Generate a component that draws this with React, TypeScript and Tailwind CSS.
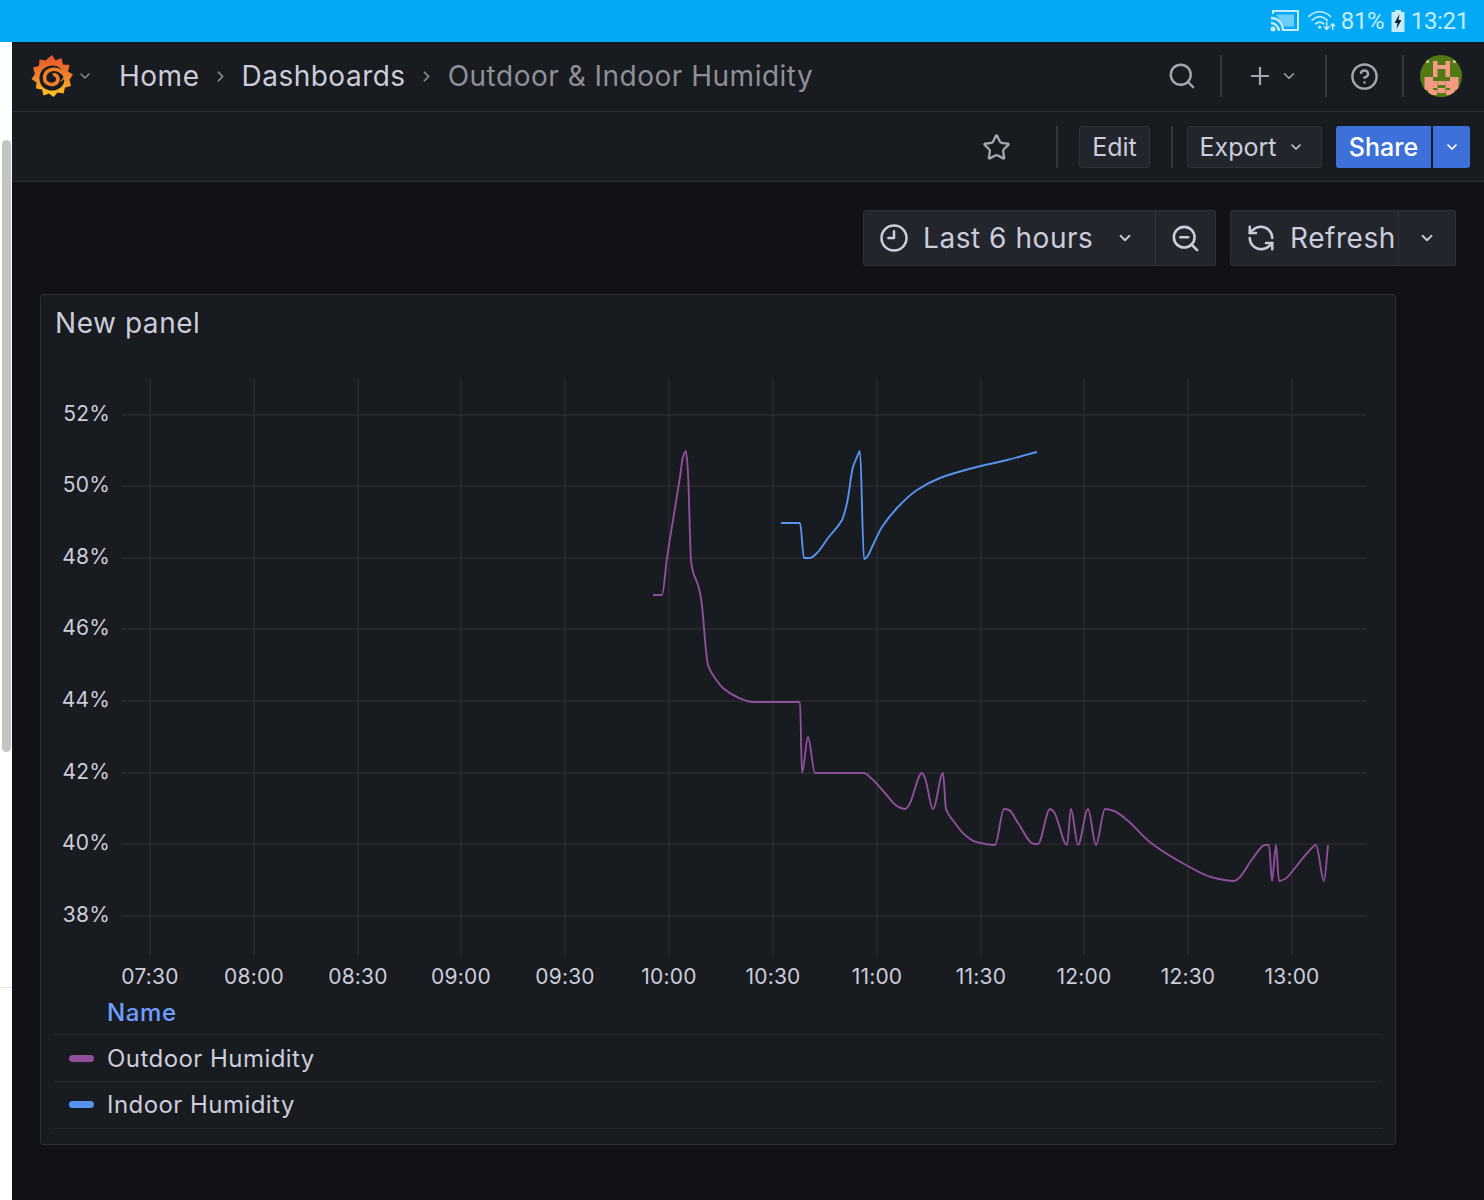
import React, { ReactNode } from 'react';
import { ChevronDown, ChevronRight, CircleHelp, Plus, RefreshCcw, Search, Star, ZoomOut } from 'lucide-react';

const yLabels = [
  { y: 415, label: '52%' },
  { y: 486, label: '50%' },
  { y: 558, label: '48%' },
  { y: 629, label: '46%' },
  { y: 701, label: '44%' },
  { y: 773, label: '42%' },
  { y: 844, label: '40%' },
  { y: 916, label: '38%' },
];

const xLabels = [
  { x: 150, label: '07:30' },
  { x: 254, label: '08:00' },
  { x: 358, label: '08:30' },
  { x: 461, label: '09:00' },
  { x: 565, label: '09:30' },
  { x: 669, label: '10:00' },
  { x: 773, label: '10:30' },
  { x: 877, label: '11:00' },
  { x: 981, label: '11:30' },
  { x: 1084, label: '12:00' },
  { x: 1188, label: '12:30' },
  { x: 1292, label: '13:00' },
];

const outdoor =
  '653,595 662,595 667,558 680,477 683,457 686,451 688,473 691,560 693,572 698,585 701,598 708,665 713,675 723,688 737,697 753,702 800,702 802,773 808,737 815,773 864,773 871,778 885,793 897,806 905,809 909,805 922,773 925,778 933,809 943,773 946,809 955,823 965,835 976,842 995,845 1004,809 1009,810 1018,823 1034,844 1038,844 1050,809 1054,812 1067,845 1071,809 1078,845 1088,809 1096,845 1105,809 1114,811 1127,820 1151,843 1186,865 1211,877 1234,881 1239,878 1253,858 1265,845 1269,845 1272,881 1276,845 1279,881 1285,879 1295,868 1309,851 1316,845 1324,881 1328,845';

const indoor =
  '781,523 800,523 804,558 810,558 817,553 828,538 842,520 847,503 853,467 857,457 860,451 864,559 867,557 873,545 882,527 897,508 917,490 940,478 973,468 1007,460 1037,452';

// monotone cubic through the points, so peaks stay on their value
function smoothPath(points: string) {
  const p = points.split(' ').map((s) => s.split(',').map(Number));
  const slope = (i: number) => (p[i + 1][1] - p[i][1]) / (p[i + 1][0] - p[i][0]);
  const tangent = (i: number) => {
    if (i === 0) return slope(0);
    if (i === p.length - 1) return slope(i - 1);
    const a = slope(i - 1);
    const b = slope(i);
    if (a * b <= 0) return 0;
    return (2 * a * b) / (a + b);
  };
  let d = `M${p[0][0]},${p[0][1]}`;
  for (let i = 0; i < p.length - 1; i++) {
    const h = (p[i + 1][0] - p[i][0]) / 3;
    d += `C${p[i][0] + h},${p[i][1] + h * tangent(i)} ${p[i + 1][0] - h},${p[i + 1][1] - h * tangent(i + 1)} ${p[i + 1][0]},${p[i + 1][1]}`;
  }
  return d;
}

const avatarPixels = [
  [13, 6, 4.5, 16], [25.5, 6, 4.5, 16], [13, 10, 17, 4], [4.5, 22, 8.5, 13], [30, 22, 8.5, 13],
  [8, 35, 9, 5], [26, 35, 9, 5], [13, 26, 4.5, 7], [25.5, 26, 4.5, 7], [17.5, 26, 8, 4], [17.5, 33, 8, 5],
];

function Sep({ h = 'h-[42px]' }: { h?: string }) {
  return <div className={`w-0.5 bg-[#34373c] ${h}`}></div>;
}

function Logo() {
  return (
    <svg width="42" height="42" viewBox="0 0 42 42">
      <defs>
        <linearGradient id="gf" x1="0" y1="0" x2="0" y2="1">
          <stop offset="0" stopColor="#e8532c" />
          <stop offset="0.5" stopColor="#f0812a" />
          <stop offset="1" stopColor="#fbca20" />
        </linearGradient>
      </defs>
      <path
        fill="url(#gf)"
        d="M21 0l3.500 5.500 6-2.500 1.500 6.500 6.500.5-1.500 6.500 5 3-3.500 5 1.500 6.500-6 1.500-1.500 6-6-1-4 4.500-4.500-3.500-5.500 2-1.500-6-6-1 .5-6-5-3.500 3.500-5L2 12.500l6-1.500.5-6.500 6 1z"
      />
      {/* dark swirl cut out of the gear */}
      <path fill="#181b1f" d="M34 20C31 12 24 9 18 11 10 13 7 21 9 27c2 7 10 10 16 8 6-2 9-7 8-11-2 2-3 3-4 3z" />
      <path
        fill="none"
        stroke="#f0812a"
        strokeWidth="3.600"
        d="M35 22C31 15 24 13 19 15 13 17 12 25 16 28c5 3 11 1 11-4 0-3-3-5-5-4"
      />
    </svg>
  );
}

function Avatar() {
  return (
    <svg width="42" height="42" viewBox="0 0 42 42">
      <defs>
        <clipPath id="av">
          <circle cx="21" cy="21" r="21" />
        </clipPath>
      </defs>
      <g clipPath="url(#av)">
        <rect width="42" height="42" fill="#527a14" />
        <rect x="6" y="5" width="3" height="3" fill="#c9c48c" />
        <rect x="33" y="5" width="3" height="3" fill="#c9c48c" />
        <g fill="#f29a84">
          {avatarPixels.map(([x, y, w, h], i) => (
            <rect key={i} x={x} y={y} width={w} height={h} />
          ))}
        </g>
      </g>
    </svg>
  );
}

function ClockIcon() {
  return (
    <svg width="30" height="30" viewBox="0 0 24 24" fill="none" stroke="#ccccdc" strokeWidth="2" strokeLinecap="round" strokeLinejoin="round">
      <circle cx="12" cy="12" r="10" />
      <path d="M12 6.500V12H7.500" />
    </svg>
  );
}

function CastIcon() {
  return (
    <svg width="30" height="24" viewBox="0 0 30 24" fill="none" stroke="#c4ecfd" strokeWidth="2">
      <path d="M3 5V2h25v19H14" />
      <path d="M6 5.500h18v12H14.500" fill="#c4ecfd" fillOpacity="0.55" stroke="none" />
      <path d="M1 9c7 0 12 5 12 13M1 14c4 0 8 4 8 8" strokeWidth="2.4" />
      <circle cx="3" cy="20" r="2.500" fill="#c4ecfd" stroke="none" />
    </svg>
  );
}

function WifiIcon() {
  return (
    <svg width="28" height="24" viewBox="0 0 30 24" fill="none" stroke="#c4ecfd" strokeWidth="1.8" strokeLinecap="round">
      <path d="M1 7c7-6.500 16-6.500 23 0M4.500 11c5-4.500 11-4.500 16 0M8 15c3-2.500 6-2.500 9 0" />
      <circle cx="12.500" cy="18.500" r="1.800" fill="#c4ecfd" stroke="none" />
      <path d="M20 13v8M17.500 18.500l2.500 2.500 2.500-2.500M26.500 21v-6M24.500 17l2-2 2 2" strokeWidth="1.6" />
    </svg>
  );
}

function BatteryIcon() {
  return (
    <svg width="14" height="24" viewBox="0 0 14 24">
      <path d="M4 1h6v2h3.500v20H.5V3H4z" fill="#c4ecfd" />
      <path d="M8.500 5L3.500 14h3l-1 6 5-9h-3z" fill="#10222d" />
    </svg>
  );
}

function Crumb({ children, muted }: { children: ReactNode; muted?: boolean }) {
  return (
    <span className={`text-[28px] leading-none tracking-[0.5px] ${muted ? 'text-[#8e8f99]' : 'text-[#ccccdc]'}`}>
      {children}
    </span>
  );
}

function Chart() {
  return (
    <svg width="1354" height="643" viewBox="41 352 1354 643" className="block" fontFamily="Inter, sans-serif">
      {xLabels.map((t) => (
        <line key={t.x} x1={t.x} x2={t.x} y1="379" y2="955" stroke="#303338" strokeWidth="1" />
      ))}
      {yLabels.map((t) => (
        <line key={t.y} x1="122" x2="1366" y1={t.y} y2={t.y} stroke="#303338" strokeWidth="1" />
      ))}
      {yLabels.map((t) => (
        <text key={t.y} x="110" y={t.y + 6} fontSize="21" fill="#ccccdc" textAnchor="end" letterSpacing="0.2">
          {t.label}
        </text>
      ))}
      {xLabels.map((t) => (
        <text key={t.x} x={t.x} y="984" fontSize="21" fill="#ccccdc" textAnchor="middle" letterSpacing="0.2">
          {t.label}
        </text>
      ))}
      <path d={smoothPath(outdoor)} fill="none" stroke="#8f4f9c" strokeWidth="1.9" strokeLinejoin="round" />
      <path d={smoothPath(indoor)} fill="none" stroke="#5794f2" strokeWidth="1.9" strokeLinejoin="round" />
    </svg>
  );
}

function LegendRow({ color, name, shift = '' }: { color: string; name: string; shift?: string }) {
  return (
    <div className={`flex h-[47px] items-center border-b border-[#26292e] pl-[15px] ${shift}`}>
      <div className={`h-[7px] w-[25px] rounded-full ${color}`}></div>
      <span className="ml-[13px] text-[24px] leading-none tracking-[0.45px] text-[#ccccdc]">{name}</span>
    </div>
  );
}

export default function App() {
  return (
    <div className="flex h-[1200px] w-[1484px] flex-col overflow-hidden bg-white font-['Inter',sans-serif]">
      {/* android status bar */}
      <div className="flex h-[42px] items-center justify-end gap-[4px] bg-[#03a9f4] pr-[15px] font-['Roboto',sans-serif] text-[24px] tracking-[-0.3px] text-[#c4ecfd]">
        <CastIcon />
        <div className="ml-[4px]">
          <WifiIcon />
        </div>
        <span className="ml-[1px] w-[46px]">81%</span>
        <BatteryIcon />
        <span className="ml-[2px]">13:21</span>
      </div>

      <div className="flex flex-1">
        {/* browser scrollbar strip */}
        <div className="w-3 pt-[98px]">
          <div className="ml-[2px] h-[612px] w-[9px] rounded-full bg-[#c4c4c4]"></div>
          <div className="mt-[235px] h-px bg-[#e4e4e4]"></div>
        </div>

        <div className="flex flex-1 flex-col bg-[#111217]">
          {/* top nav */}
          <div className="flex h-[70px] items-center border-b border-[#2c2f34] bg-[#181b1f] pb-px">
            <div className="ml-[19px]">
              <Logo />
            </div>
            <ChevronDown size={16} className="ml-[4px] text-[#8e8f99]" />
            <div className="ml-[26px] flex items-center">
              <Crumb>Home</Crumb>
              <ChevronRight size={17} strokeWidth={2.4} className="mx-[12.5px] text-[#8e8f99]" />
              <Crumb>Dashboards</Crumb>
              <ChevronRight size={17} strokeWidth={2.4} className="mx-[12.5px] text-[#8e8f99]" />
              <Crumb muted>Outdoor &amp; Indoor Humidity</Crumb>
            </div>
            <div className="ml-auto flex items-center pr-[22px]">
              <Search size={30} strokeWidth={1.9} className="text-[#a5a6b0]" />
              <div className="ml-[23px]">
                <Sep />
              </div>
              <Plus size={28} strokeWidth={1.9} className="ml-[24px] text-[#a5a6b0]" />
              <ChevronDown size={18} className="ml-[6px] text-[#a5a6b0]" />
              <div className="ml-[27px]">
                <Sep />
              </div>
              <CircleHelp size={29} strokeWidth={2} className="ml-[23px] text-[#a5a6b0]" />
              <div className="ml-[23px]">
                <Sep />
              </div>
              <div className="ml-[16px]">
                <Avatar />
              </div>
            </div>
          </div>

          {/* dashboard toolbar */}
          <div className="flex h-[70px] items-center justify-end border-b border-[#2c2f34] bg-[#181b1f] pt-px pr-[14px] text-[25px] leading-none">
            <Star size={29} strokeWidth={1.9} className="text-[#a5a6b0]" />
            <div className="ml-[45px]">
              <Sep />
            </div>
            <div className="ml-[21px] flex h-[42px] w-[71px] items-center justify-center rounded-[3px] border border-[#2e3136] bg-[#22252b] text-[#ccccdc]">
              Edit
            </div>
            <div className="ml-[21px]">
              <Sep />
            </div>
            <div className="ml-[14px] flex h-[42px] w-[135px] items-center justify-center gap-[12px] rounded-[3px] border border-[#2e3136] bg-[#22252b] pr-[5px] text-[#ccccdc]">
              Export
              <ChevronDown size={16} strokeWidth={2.4} />
            </div>
            <div className="ml-[14px] flex h-[42px] w-[95px] items-center justify-center rounded-l-[3px] bg-[#3d71d9] font-medium text-white">
              Share
            </div>
            <div className="ml-[2px] flex h-[42px] w-[37px] items-center justify-center rounded-r-[3px] bg-[#3d71d9] text-white">
              <ChevronDown size={16} strokeWidth={2.6} />
            </div>
          </div>

          {/* time controls */}
          <div className="flex h-[112px] items-center justify-end pr-7 text-[28px] leading-none tracking-[0.55px] text-[#ccccdc]">
            <div className="flex h-[56px] w-[293px] items-center rounded-l-[3px] border border-[#2e3136] bg-[#22252b] pl-[15px]">
              <ClockIcon />
              <span className="ml-[14px]">Last 6 hours</span>
              <ChevronDown size={18} strokeWidth={2.4} className="ml-[23px]" />
            </div>
            <div className="flex h-[56px] w-[60px] items-center justify-center rounded-r-[3px] border border-l-0 border-[#2e3136] bg-[#22252b]">
              <ZoomOut size={31} strokeWidth={2} />
            </div>
            <div className="ml-[14px] flex h-[56px] w-[169px] items-center rounded-l-[3px] border border-[#2e3136] bg-[#22252b] pl-[15px]">
              <RefreshCcw size={30} strokeWidth={2} />
              <span className="ml-[14px]">Refresh</span>
            </div>
            <div className="flex h-[56px] w-[57px] items-center justify-center rounded-r-[3px] border border-l-0 border-[#2e3136] bg-[#22252b]">
              <ChevronDown size={18} strokeWidth={2.4} />
            </div>
          </div>

          {/* panel */}
          <div className="ml-7 flex h-[851px] w-[1356px] flex-col rounded-[3px] border border-[#2c2f34] bg-[#181b1f]">
            <div className="flex h-[57px] items-center pb-[2px] pl-[14px] text-[28px] leading-none tracking-[0.55px] text-[#ccccdc]">
              New panel
            </div>
            <Chart />
            <div className="mx-[13px] mt-px">
              <div className="h-[39px] border-b border-[#26292e] pt-[5px] pl-[53px] text-[24px] leading-none font-medium tracking-[0.6px] text-[#6e9fff]">
                Name
              </div>
              <LegendRow color="bg-[#8f4f9c]" name="Outdoor Humidity" shift="pt-px" />
              <LegendRow color="bg-[#5794f2]" name="Indoor Humidity" shift="pb-px" />
            </div>
          </div>
        </div>
      </div>
    </div>
  );
}
